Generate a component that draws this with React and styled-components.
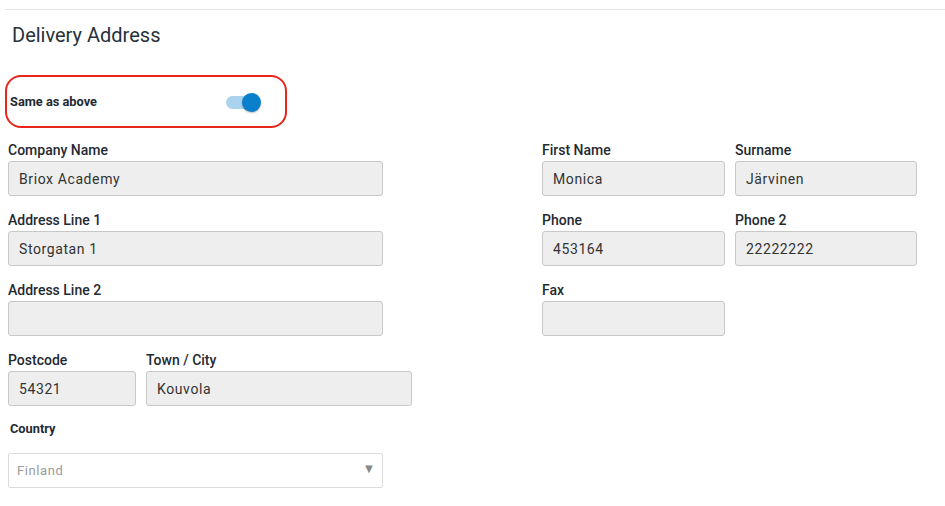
import styled, { createGlobalStyle } from 'styled-components'

const GlobalStyle = createGlobalStyle`
  body {
    margin: 0;
    background: #ffffff;
    font-family: Roboto, "Liberation Sans", Arial, sans-serif;
  }
`

const Page = styled.div`
  padding: 9px 0 0 8px;
  width: 945px;
  box-sizing: border-box;
`

const TopRule = styled.div`
  height: 1px;
  margin-left: -3px;
  background: #e6e6e6;
`

const Title = styled.h2`
  margin: 13px 0 0 4px;
  font-size: 20px;
  line-height: 25px;
  font-weight: 400;
  color: #27313b;
`

const ToggleBox = styled.div`
  margin: 27px 0 0 -3px;
  width: 282px;
  height: 53px;
  box-sizing: border-box;
  border: 2px solid #e8261b;
  border-radius: 16px;
  display: flex;
  align-items: center;
  padding: 0 28px 0 3px;
  justify-content: space-between;
`

const SmallLabel = styled.span`
  font-size: 12.8px;
  font-weight: 700;
  color: #1f2a33;
`

const Switch = styled.div`
  position: relative;
  width: 31px;
  height: 13px;
  border-radius: 7px;
  background: #a9d3ee;
  margin-top: 2px;
`

const Knob = styled.div`
  position: absolute;
  right: -4px;
  top: -3px;
  width: 19px;
  height: 19px;
  border-radius: 50%;
  background: #0a7fcc;
  box-shadow: 0 1px 2px rgba(0, 0, 0, 0.25);
`

const Form = styled.div`
  margin-top: 12px;
  display: flex;
`

const Column = styled.div`
  width: ${p => p.$width}px;
  display: flex;
  flex-direction: column;
`

const Row = styled.div`
  display: flex;
  gap: 10px;
`

const Field = styled.div`
  display: flex;
  flex-direction: column;
  margin-bottom: 14px;
`

const Label = styled.label`
  font-size: 14px;
  line-height: 18px;
  font-weight: 500;
  color: #1f2a33;
  margin: 1px 0 2px;
`

const Input = styled.div`
  width: ${p => p.$width}px;
  height: 35px;
  box-sizing: border-box;
  background: #eeeeee;
  border: 1px solid #c8c8c8;
  border-radius: 3px;
  padding: 0 10px;
  display: flex;
  align-items: center;
  font-size: 14px;
  letter-spacing: 0.6px;
  color: #333333;
`

const CountryField = styled.div`
  display: flex;
  flex-direction: column;
`

const CountryLabel = styled(SmallLabel)`
  margin-left: 2px;
  line-height: 16px;
  margin-top: 1px;
`

const Select = styled.div`
  margin-top: 16px;
  width: 375px;
  height: 35px;
  box-sizing: border-box;
  border: 1px solid #dcdcdc;
  border-radius: 2px;
  background: #fff;
  display: flex;
  align-items: center;
  justify-content: space-between;
  padding: 0 6px 1px 8px;
  font-size: 13px;
  letter-spacing: 0.6px;
  color: #9a9a9a;
`

const Arrow = styled.span`
  font-size: 13px;
  color: #888888;
  margin-top: -4px;
`

const TextField = ({ label, value, width }) => (
  <Field>
    <Label>{label}</Label>
    <Input $width={width}>{value}</Input>
  </Field>
)

export default function App() {
  return (
    <>
      <GlobalStyle />
      <Page>
        <TopRule />
        <Title>Delivery Address</Title>
        <ToggleBox>
          <SmallLabel>Same as above</SmallLabel>
          <Switch>
            <Knob />
          </Switch>
        </ToggleBox>
        <Form>
          <Column $width={534}>
            <TextField label="Company Name" value="Briox Academy" width={375} />
            <TextField label="Address Line 1" value="Storgatan 1" width={375} />
            <TextField label="Address Line 2" value="" width={375} />
            <Row>
              <TextField label="Postcode" value="54321" width={128} />
              <TextField label="Town / City" value="Kouvola" width={266} />
            </Row>
            <CountryField>
              <CountryLabel>Country</CountryLabel>
              <Select>
                Finland
                <Arrow>▼</Arrow>
              </Select>
            </CountryField>
          </Column>
          <Column $width={380}>
            <Row>
              <TextField label="First Name" value="Monica" width={183} />
              <TextField label="Surname" value="Järvinen" width={182} />
            </Row>
            <Row>
              <TextField label="Phone" value="453164" width={183} />
              <TextField label="Phone 2" value="22222222" width={182} />
            </Row>
            <TextField label="Fax" value="" width={183} />
          </Column>
        </Form>
      </Page>
    </>
  )
}
